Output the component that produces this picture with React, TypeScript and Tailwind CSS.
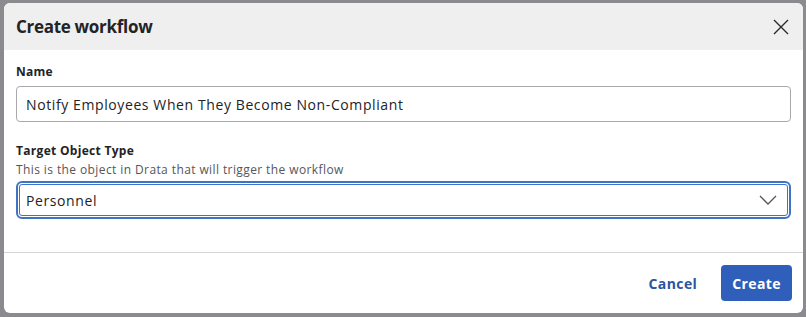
import React from 'react';

const font = { fontFamily: '"Open Sans", "Liberation Sans", sans-serif' };

export const CreateWorkflowModal: React.FC = () => {
  return (
    <div className="w-[806px] h-[317px] bg-[#8b8b8f] pt-[3px] pl-[4px] pr-[3px] pb-[4px]" style={font}>
      <div className="h-full bg-white rounded-[6px] overflow-hidden flex flex-col">
        <header className="h-[47px] bg-[#efefef] flex items-center justify-between pl-[12px] pr-[12px]">
          <h1 className="text-[17px] font-bold text-[#222326] tracking-[-0.3px]">Create workflow</h1>
          <button aria-label="Close" className="w-[20px] h-[20px] flex items-center justify-center text-[#2a2a2a]">
            <svg width="16" height="16" viewBox="0 0 16 16" fill="none" stroke="currentColor" strokeWidth="1.4">
              <path d="M1 1L15 15M15 1L1 15" />
            </svg>
          </button>
        </header>

        <section className="flex flex-col px-[12px] pt-[14px] h-[203px] border-b border-[#d4d4d4]">
          <label className="text-[12px] font-bold text-[#222326] leading-[16px] tracking-[0.2px]">Name</label>
          <div className="mt-[6px] h-[36px] border border-[#a9a9ad] rounded-[4px] flex items-center px-[9px] text-[14px] text-[#222326] tracking-[0.6px]">
            Notify Employees When They Become Non-Compliant
          </div>

          <label className="mt-[21px] text-[12px] font-bold text-[#222326] leading-[16px] tracking-[0.3px]">Target Object Type</label>
          <p className="mt-[3px] text-[12px] text-[#55565a] leading-[16px] tracking-[0.4px]">This is the object in Drata that will trigger the workflow</p>
          <div className="mt-[3px] h-[38px] rounded-[6px] border-2 border-[#3f73c4] p-[1px]">
            <div className="h-full rounded-[3px] border border-[#3f73c4] flex items-center justify-between pl-[6px] pr-[10px] text-[14px] text-[#222326] tracking-[0.6px]">
              <span>Personnel</span>
              <svg width="18" height="10" viewBox="0 0 18 10" fill="none" stroke="#55565a" strokeWidth="1.3">
                <path d="M1 1L9 9L17 1" />
              </svg>
            </div>
          </div>
        </section>

        <footer className="flex-1 flex items-center justify-end gap-[24px] pr-[11px]">
          <button className="text-[14px] font-bold text-[#2d55a0] tracking-[0.4px]">Cancel</button>
          <button className="h-[36px] px-[11px] rounded-[4px] bg-[#2f5fbb] text-white text-[14px] font-bold tracking-[0.4px]">Create</button>
        </footer>
      </div>
    </div>
  );
};

export default CreateWorkflowModal;
